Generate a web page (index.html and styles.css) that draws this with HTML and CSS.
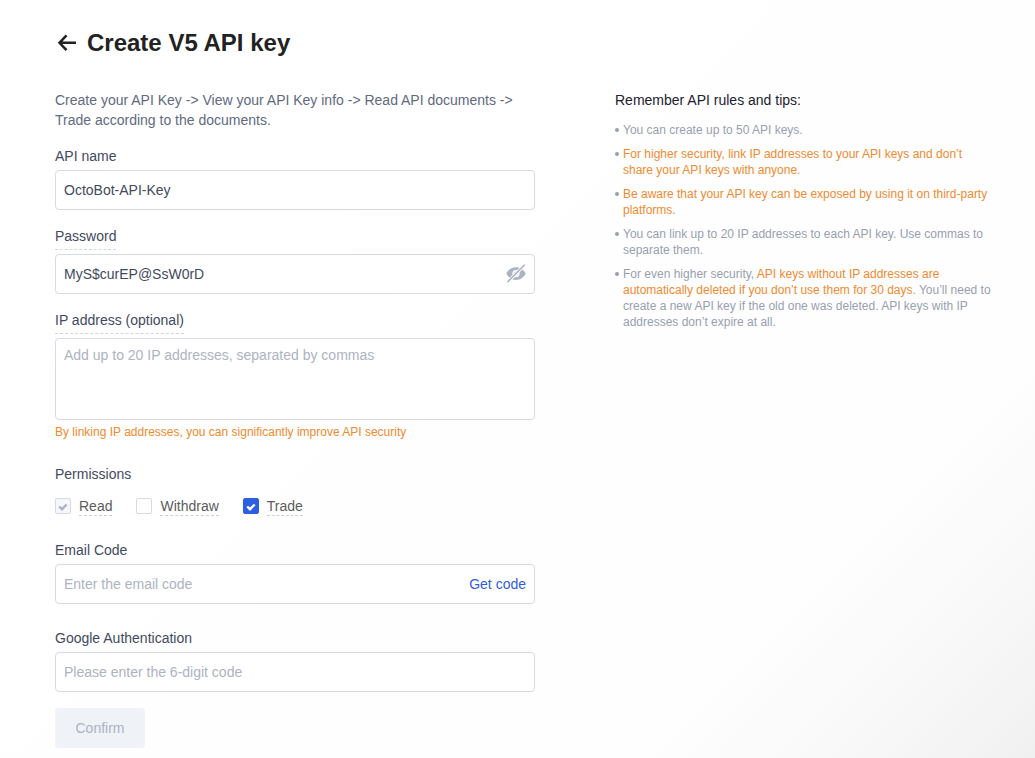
FILE: index.html
```html
<!DOCTYPE html>
<html lang="en">
<head>
<meta charset="utf-8">
<meta name="viewport" content="width=device-width, initial-scale=1">
<title>Create V5 API key</title>
<link rel="stylesheet" href="styles.css">
</head>
<body>
<main class="page">
  <header class="page-header">
    <a class="back" href="#" aria-label="Back">
      <svg width="24" height="24" viewBox="0 0 24 24" fill="none" stroke="currentColor" stroke-width="2.5"><path d="M11.5 4.4 4.5 11.8l7 7.4M4.5 11.8H21"/></svg>
    </a>
    <h1 class="title">Create V5 API key</h1>
  </header>
  <div class="columns">
    <form class="form">
      <p class="intro">Create your API Key -&gt; View your API Key info -&gt; Read API documents -&gt; Trade according to the documents.</p>

      <div class="field">
        <label class="label" for="name">API name</label>
        <div class="box"><input class="input" id="name" type="text" value="OctoBot-API-Key"></div>
      </div>

      <div class="field">
        <label class="label label-hint" for="password">Password</label>
        <div class="box">
          <input class="input" id="password" type="text" value="MyS$curEP@SsW0rD">
          <button class="toggle" type="button" aria-label="Hide password">
            <svg width="20" height="20" viewBox="0 0 20 20"><path fill="currentColor" fill-rule="evenodd" d="M.3 9.500C2.200 5.500 5.700 3.200 10 3.200S17.800 5.500 19.700 9.500C17.800 13.500 14.300 15.900 10 15.900S2.200 13.500.3 9.500ZM10 6a3.600 3.600 0 1 0 0 7.200A3.600 3.600 0 0 0 10 6Z"/><circle cx="10" cy="9.600" r="2.100" fill="currentColor"/><path d="M1.500 18 18.700.8" stroke="#fff" stroke-width="3.200"/><path d="M1.500 18 18.700.8" stroke="currentColor" stroke-width="1.600"/></svg>
          </button>
        </div>
      </div>

      <div class="field">
        <label class="label label-hint" for="ip">IP address (optional)</label>
        <textarea class="textarea" id="ip" placeholder="Add up to 20 IP addresses, separated by commas"></textarea>
        <p class="note">By linking IP addresses, you can significantly improve API security</p>
      </div>

      <fieldset class="permissions">
        <legend class="legend">Permissions</legend>
        <div class="checks">
          <label class="check"><span class="mark"><input class="tick" type="checkbox" checked disabled><svg class="tick-icon" viewBox="0 0 16 16"><path d="M4.200 8.500 7 11.200l4.700-4.700"/></svg></span><span class="check-text">Read</span></label>
          <label class="check"><span class="mark"><input class="tick" type="checkbox"><svg class="tick-icon" viewBox="0 0 16 16"><path d="M4.200 8.500 7 11.200l4.700-4.700"/></svg></span><span class="check-text">Withdraw</span></label>
          <label class="check"><span class="mark"><input class="tick" type="checkbox" checked><svg class="tick-icon" viewBox="0 0 16 16"><path d="M4.200 8.500 7 11.200l4.700-4.700"/></svg></span><span class="check-text">Trade</span></label>
        </div>
      </fieldset>

      <div class="field field-wide">
        <label class="label" for="email">Email Code</label>
        <div class="box">
          <input class="input" id="email" type="text" placeholder="Enter the email code">
          <button class="get-code" type="button">Get code</button>
        </div>
      </div>

      <div class="field field-wide">
        <label class="label" for="google">Google Authentication</label>
        <div class="box"><input class="input" id="google" type="text" placeholder="Please enter the 6-digit code"></div>
      </div>

      <button class="confirm" type="submit" disabled>Confirm</button>
    </form>

    <aside class="rules">
      <h2 class="rules-title">Remember API rules and tips:</h2>
      <ul class="rules-list">
        <li class="rule">You can create up to 50 API keys.</li>
        <li class="rule"><span class="warn">For higher security, link IP addresses to your API keys and don’t share your API keys with anyone.</span></li>
        <li class="rule"><span class="warn">Be aware that your API key can be exposed by using it on third-party platforms.</span></li>
        <li class="rule">You can link up to 20 IP addresses to each API key. Use commas to separate them.</li>
        <li class="rule">For even higher security, <span class="warn">API keys without IP addresses are automatically deleted if you don’t use them for 30 days</span>. You’ll need to create a new API key if the old one was deleted. API keys with IP addresses don’t expire at all.</li>
      </ul>
    </aside>
  </div>
</main>
</body>
</html>
```
FILE: styles.css
```css
* {
  box-sizing: border-box;
}

body {
  margin: 0;
  font: 14px/20px "Liberation Sans", Arial, sans-serif;
  color: #424a5e;
  background: linear-gradient(135deg, #fff 0%, #fefefe 78%, #f7f7f7 91%, #f0f0f0 100%);
}

h1, h2, p, ul {
  margin: 0;
}

button, input, textarea {
  margin: 0;
  font: inherit;
}

button {
  padding: 0;
  border: 0;
  background: none;
  cursor: pointer;
}

.page {
  min-height: 100vh;
  padding: 27px 40px 10px 55px;
}

.page-header {
  display: flex;
  align-items: center;
  gap: 8px;
  margin-bottom: 31px;
  color: #222;
}

.back {
  display: flex;
  color: inherit;
}

.title {
  font-size: 24px;
  line-height: 32px;
}

.columns {
  display: grid;
  grid-template-columns: minmax(0, 480px) minmax(0, 380px);
  gap: 80px;
}

.intro {
  color: #616a80;
}

.field {
  display: flex;
  flex-direction: column;
  align-items: flex-start;
  gap: 4px;
  margin-top: 16px;
}

.field-wide {
  margin-top: 24px;
}

.label-hint {
  padding-bottom: 3px;
  border-bottom: 1px dashed #d3d6dc;
}

.box,
.textarea {
  width: 100%;
  border: 1px solid #d6dae6;
  border-radius: 4px;
  background: #fff;
}

.box {
  display: flex;
  align-items: center;
  height: 40px;
  padding: 0 8px;
}

.input {
  flex: 1;
  min-width: 0;
  padding: 0;
  border: 0;
  outline: 0;
  color: #424a5e;
  background: none;
}

.textarea {
  display: block;
  height: 82px;
  padding: 6px 8px;
  resize: none;
  color: #424a5e;
}

.input::placeholder,
.textarea::placeholder {
  color: #adb3c2;
}

.toggle {
  display: flex;
  color: #acb4c3;
}

.note {
  font-size: 12px;
  line-height: 16px;
  color: #ef8a2f;
}

.permissions {
  margin: 24px 0 0;
  padding: 0;
  border: 0;
}

.legend {
  padding: 0;
}

.checks {
  display: flex;
  gap: 24px;
  margin-top: 12px;
}

.check {
  display: flex;
  align-items: center;
  gap: 8px;
  color: #5c5c5c;
}

.mark {
  display: grid;
  width: 16px;
  height: 16px;
}

.tick,
.tick-icon {
  grid-area: 1 / 1;
  width: 16px;
  height: 16px;
}

.tick {
  appearance: none;
  margin: 0;
  border: 1px solid #d6dae6;
  border-radius: 2px;
  background: #fff;
}

.tick-icon {
  display: none;
  fill: none;
  stroke: #fff;
  stroke-width: 2.4;
  pointer-events: none;
}

.tick:checked {
  border-color: #2b60e2;
  background: #2b60e2;
}

.tick:disabled {
  border-color: #d6dae6;
  background: #f5f7fa;
}

.tick:checked + .tick-icon {
  display: block;
}

.tick:disabled + .tick-icon {
  stroke: #adb3c2;
}

.check-text {
  height: 20px;
  border-bottom: 1px dashed #cfcfcf;
}

.get-code {
  color: #2f60dc;
}

.confirm {
  height: 40px;
  margin-top: 16px;
  padding: 0 20px;
  min-width: 90px;
  border-radius: 4px;
  color: #adb3c2;
  background: #eff2f7;
}

.rules-title {
  font-size: 14px;
  font-weight: 400;
  color: #1c2030;
}

.rules-list {
  display: flex;
  flex-direction: column;
  gap: 8px;
  margin-top: 12px;
  padding: 0;
  list-style: none;
  font-size: 12px;
  line-height: 16px;
  color: #989fb0;
}

.rule {
  position: relative;
  padding-left: 8px;
}

.rule::before {
  content: "";
  position: absolute;
  top: 6px;
  left: 0;
  width: 4px;
  height: 4px;
  border-radius: 50%;
  background: #989fb0;
}

.warn {
  color: #ef8a2f;
}
```
